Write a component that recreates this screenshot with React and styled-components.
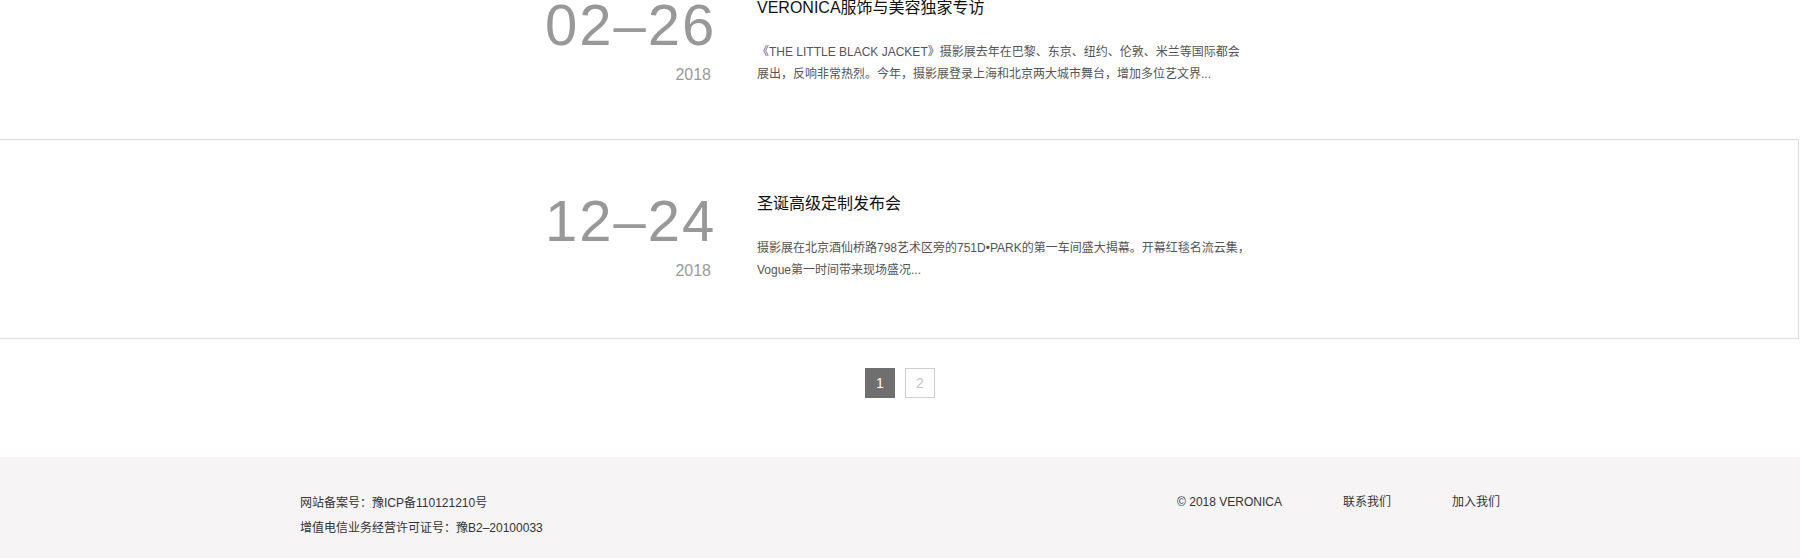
import React from 'react'
import styled, { createGlobalStyle } from 'styled-components'

const GlobalStyle = createGlobalStyle`
html, body {
    margin: 0;
    padding: 0;
    background: #fff;
    overflow: hidden;
}
body {
    font-family: "Liberation Sans", "Noto Sans CJK SC", sans-serif;
    color: #333;
}
`

const Page = styled.div`
display: flex;
flex-direction: column;
`

const NewsList = styled.div`
margin-top: -57px;
`

const NewsItem = styled.div`
margin: 0 1px 0 -1px;
border: 1px solid ${props => props.$active ? '#dcdcdc' : 'transparent'};
padding: 52px 0 ${props => props.$active ? '57px' : '53px'};
`

const ItemInner = styled.div`
width: 708px;
margin: 0 auto;
display: flex;
`

const DateCol = styled.div`
width: 166px;
display: flex;
flex-direction: column;
`

const Day = styled.div`
font-size: 58px;
line-height: 58px;
letter-spacing: 2px;
color: #989898;
white-space: nowrap;
`

const Year = styled.div`
margin-top: 11px;
font-size: 16px;
line-height: 20px;
color: #9a9a9a;
text-align: right;
`

const Content = styled.div`
width: 493px;
margin-left: 46px;
`

const Title = styled.h3`
margin: 0;
font-size: 16px;
line-height: 24px;
font-weight: normal;
color: #111;
`

const Desc = styled.p`
margin: 21px 0 0;
font-size: 12px;
line-height: 22px;
color: #555;
`

const Pager = styled.div`
display: flex;
justify-content: center;
gap: 10px;
padding: 29px 0 59px;
`

const PageButton = styled.a`
box-sizing: border-box;
width: 30px;
height: 30px;
display: flex;
justify-content: center;
align-items: center;
font-size: 14px;
border: 1px solid ${props => props.$current ? '#6f6f6f' : '#cfcfcf'};
background: ${props => props.$current ? '#6f6f6f' : '#fff'};
color: ${props => props.$current ? '#fff' : '#c2c2c2'};
cursor: pointer;
`

const Footer = styled.footer`
background: #f6f4f5;
height: 101px;
padding-top: 34px;
box-sizing: border-box;
`

const FooterInner = styled.div`
width: 1200px;
margin: 0 auto;
display: flex;
justify-content: space-between;
align-items: flex-start;
font-size: 12px;
line-height: 25px;
color: #333;
`

const FooterInfo = styled.div`
display: flex;
flex-direction: column;
`

const FooterLinks = styled.div`
display: flex;
gap: 61px;
line-height: 23px;
`

const FooterLink = styled.a`
color: #333;
text-decoration: none;
`

const news = [
    {
        day: '02–26',
        year: '2018',
        title: 'VERONICA服饰与美容独家专访',
        desc: '《THE LITTLE BLACK JACKET》摄影展去年在巴黎、东京、纽约、伦敦、米兰等国际都会展出，反响非常热烈。今年，摄影展登录上海和北京两大城市舞台，增加多位艺文界...'
    },
    {
        day: '12–24',
        year: '2018',
        title: '圣诞高级定制发布会',
        desc: '摄影展在北京酒仙桥路798艺术区旁的751D•PARK的第一车间盛大揭幕。开幕红毯名流云集，Vogue第一时间带来现场盛况...',
        active: true
    }
]

function App() {
    return (
        <Page>
            <GlobalStyle />
            <NewsList>
                {news.map(item => (
                    <NewsItem key={item.day} $active={item.active}>
                        <ItemInner>
                            <DateCol>
                                <Day>{item.day}</Day>
                                <Year>{item.year}</Year>
                            </DateCol>
                            <Content>
                                <Title>{item.title}</Title>
                                <Desc>{item.desc}</Desc>
                            </Content>
                        </ItemInner>
                    </NewsItem>
                ))}
            </NewsList>
            <Pager>
                <PageButton $current>1</PageButton>
                <PageButton>2</PageButton>
            </Pager>
            <Footer>
                <FooterInner>
                    <FooterInfo>
                        <span>网站备案号：豫ICP备110121210号</span>
                        <span>增值电信业务经营许可证号：豫B2–20100033</span>
                    </FooterInfo>
                    <FooterLinks>
                        <FooterLink>© 2018 VERONICA</FooterLink>
                        <FooterLink>联系我们</FooterLink>
                        <FooterLink>加入我们</FooterLink>
                    </FooterLinks>
                </FooterInner>
            </Footer>
        </Page>
    )
}

export default App
